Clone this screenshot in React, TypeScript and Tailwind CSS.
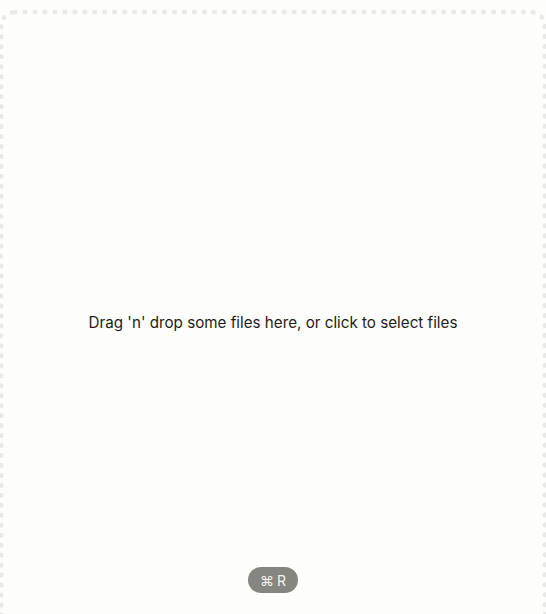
export default function App() {
  return (
    <div className="h-[614px] w-[546px] overflow-hidden bg-[#fdfdfb] font-['Inter',sans-serif]">
      <div className="relative mx-[-1px] mt-[10px] flex h-[640px] items-start justify-center rounded-[16px] border-[5px] border-dotted border-[#e9e9e7] bg-[#fdfdfb]">
        <p className="mt-[297px] text-[15.2px] text-[#1d1d18]">Drag 'n' drop some files here, or click to select files</p>
      </div>
      <div className="absolute left-[248px] top-[567px] flex h-[26px] w-[50px] items-center justify-center gap-[3px] rounded-full bg-[#85867f] text-[14px] text-[#f4f4f0]">
        <span>⌘</span>
        <span>R</span>
      </div>
    </div>
  );
}
